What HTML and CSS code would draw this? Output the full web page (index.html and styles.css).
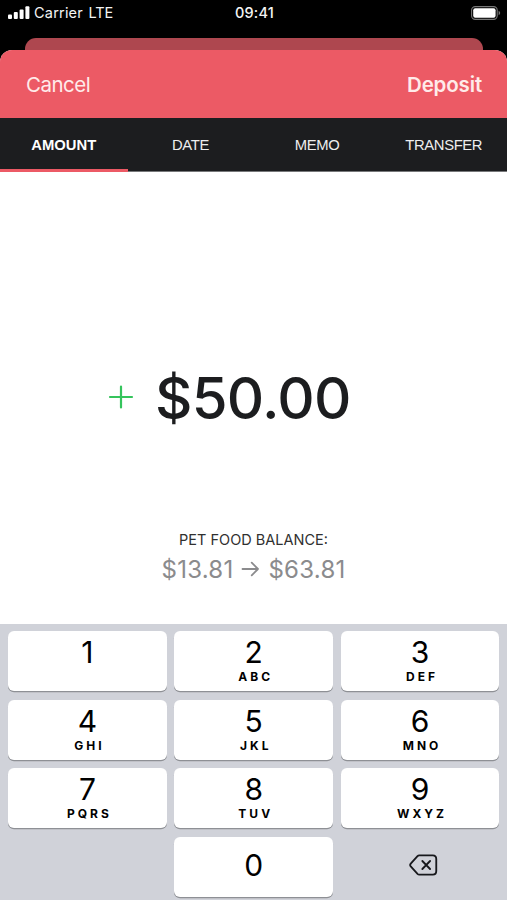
FILE: index.html
```html
<!DOCTYPE html>
<html lang="en">
<head>
<meta charset="utf-8">
<title>Deposit</title>
<link rel="stylesheet" href="styles.css">
</head>
<body>
<div class="screen">
  <header class="status">
    <div class="carrier">
      <svg class="signal" width="22" height="14" viewBox="0 0 22 14" fill="#fff"><rect x="0" y="8.5" width="4" height="4.5" rx="1"/><rect x="5.8" y="6" width="4" height="7" rx="1"/><rect x="11.6" y="3.5" width="4" height="9.5" rx="1"/><rect x="17.4" y="0.3" width="4" height="12.7" rx="1"/></svg>
      <span class="carrier-name">Carrier</span><span class="network">LTE</span>
    </div>
    <time class="clock">09:41</time>
    <svg class="battery" width="30" height="14" viewBox="0 0 30 14"><rect x="0.6" y="0.6" width="25.6" height="12.8" rx="3.6" fill="none" stroke="#777" stroke-width="1.1"/><rect x="2.2" y="2.2" width="22.4" height="9.6" rx="2" fill="#fff"/><path d="M27.6 4.8Q29.2 5.5 29.2 7T27.6 9.2Z" fill="#777"/></svg>
  </header>
  <div class="back-card"></div>
  <main class="sheet">
    <nav class="bar"><span class="cancel">Cancel</span><span class="deposit">Deposit</span></nav>
    <div class="tabs">
      <span class="tab active">AMOUNT</span><span class="tab">DATE</span><span class="tab">MEMO</span><span class="tab">TRANSFER</span>
    </div>
    <section class="entry">
      <div class="amount-row">
        <svg class="plus" width="26" height="26" viewBox="0 0 26 26" fill="none" stroke="#35c45c" stroke-width="2.2" stroke-linecap="round"><path d="M2 13H24M13 2.5V23.5"/></svg>
        <span class="amount">$50.00</span>
      </div>
      <div class="balance-label">PET FOOD BALANCE:</div>
      <div class="balance"><span>$13.81</span><svg width="19" height="16" viewBox="0 0 19 16" fill="none" stroke="#8b8b8d" stroke-width="1.8" stroke-linecap="round" stroke-linejoin="round"><path d="M1.5 8H17M10.7 1.7L17 8L10.7 14.3"/></svg><span>$63.81</span></div>
    </section>
    <section class="keypad">
      <div class="key"><b>1</b></div>
      <div class="key"><b>2</b><i>ABC</i></div>
      <div class="key"><b>3</b><i>DEF</i></div>
      <div class="key"><b>4</b><i>GHI</i></div>
      <div class="key"><b>5</b><i>JKL</i></div>
      <div class="key"><b>6</b><i>MNO</i></div>
      <div class="key"><b>7</b><i>PQRS</i></div>
      <div class="key"><b>8</b><i>TUV</i></div>
      <div class="key"><b>9</b><i>WXYZ</i></div>
      <div class="blank"></div>
      <div class="key zero"><b>0</b></div>
      <div class="blank"><svg width="29" height="22" viewBox="0 0 30 22" preserveAspectRatio="none" fill="none" stroke="#17181c" stroke-width="1.9" stroke-linecap="round" stroke-linejoin="round"><path d="M10.6 1.4H24.6Q28.2 1.4 28.2 5V17Q28.2 20.6 24.6 20.6H10.6Q9.6 20.6 8.8 19.8L1.8 12.4Q.6 11 1.8 9.6L8.8 2.2Q9.6 1.4 10.6 1.4Z"/><path d="M13.8 7L21.8 15M21.8 7L13.8 15"/></svg></div>
    </section>
  </main>
</div>
</body>
</html>
```
FILE: styles.css
```css
* { box-sizing: border-box; }
body { margin: 0; font-family: Inter, sans-serif; background: #000; }
.screen { width: 507px; height: 900px; overflow: hidden; display: flex; flex-direction: column; background: #000; }
.status { height: 38px; padding: 0 6px 0 8px; display: grid; grid-template-columns: 1fr auto 1fr; align-items: start; color: #f4f4f4; font-size: 14.5px; line-height: 26px; flex: none; }
.carrier { display: flex; letter-spacing: .2px; }
.signal { margin: 6px 4px 0 0; }
.network { margin-left: 5.5px; letter-spacing: -.1px; }
.clock { font-weight: 500; letter-spacing: .2px; }
.battery { justify-self: end; margin-top: 6px; }
.back-card { height: 12px; margin: 0 24px 0 25px; border-radius: 11px 11px 0 0; background: #ae474f; flex: none; }
.sheet { flex: 1; display: flex; flex-direction: column; border-radius: 12px 12px 0 0; overflow: hidden; background: #fff; }
.bar { height: 68px; padding: 0 25px 0 26px; display: flex; justify-content: space-between; align-items: center; background: #ec5a65; color: #ffebea; font-size: 20.5px; flex: none; }
.cancel { letter-spacing: -.5px; }
.deposit { font-weight: 600; letter-spacing: -.15px; }
.tabs { height: 54px; display: grid; grid-template-columns: 127.5px 126px 127px 126.5px; background: #1c1d1f; color: #eee; font: 14.8px/54px "Liberation Sans", sans-serif; text-align: center; border-bottom: 1px solid #77787a; flex: none; letter-spacing: -.35px; }
.tab { height: 54px; }
.active { border-bottom: 3px solid #ec5a65; color: #fff; font-weight: 700; letter-spacing: 0; }
.entry { height: 452px; padding-top: 190px; display: flex; flex-direction: column; align-items: center; flex: none; }
.amount-row { align-self: flex-start; height: 72px; padding-left: 108px; display: flex; align-items: center; }
.plus { margin: -3px 21px 0 0; }
.amount { color: #1c1d1f; font-size: 58px; font-weight: 500; line-height: 72px; letter-spacing: -.75px; }
.balance-label { margin-top: 95px; height: 22px; line-height: 22px; font-size: 14.5px; color: #303030; }
.balance { height: 36px; display: flex; align-items: center; gap: 8px; font-size: 24px; letter-spacing: .25px; color: #8b8b8d; }
.keypad { flex: 1; padding: 7px 7.5px 0 8px; display: grid; grid-template-columns: repeat(3, 1fr); grid-auto-rows: 60px; gap: 8.5px 7.5px; align-content: start; background: #d0d2d9; }
.key { border-radius: 6px; background: #fff; box-shadow: 0 1.3px 0 #8e9095; display: flex; flex-direction: column; align-items: center; color: #000; padding-top: 4px; }
.key b { font-size: 30px; font-weight: 400; line-height: 35px; }
.key i { font-style: normal; font-size: 12px; font-weight: 700; letter-spacing: 3px; margin-right: -4px; line-height: 14px; }
.zero { padding-top: 11px; }
.blank { display: flex; align-items: center; justify-content: center; padding: 0 0 3px 7px; }
```
